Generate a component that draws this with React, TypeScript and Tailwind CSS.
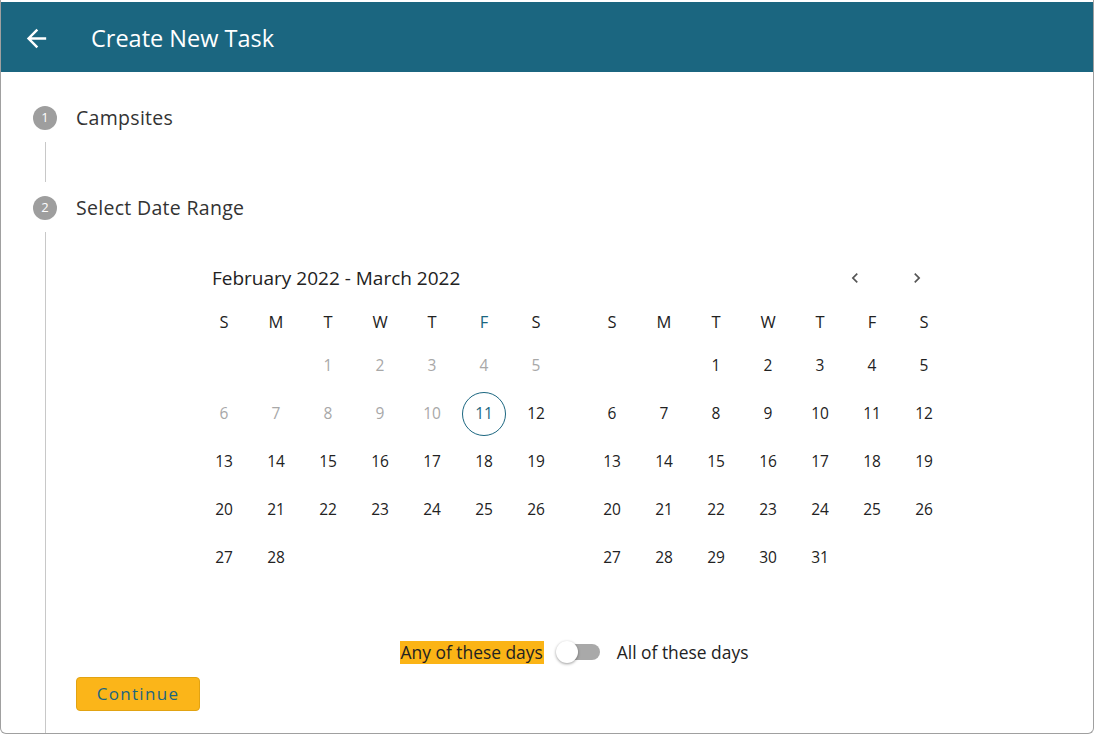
import React from "react";

const WEEK = ["S", "M", "T", "W", "T", "F", "S"];

type Day = { n: number; past?: boolean; selected?: boolean } | null;

const buildMonth = (offset: number, days: number, pastUntil: number, selected: number): Day[][] => {
  const cells: Day[] = [];
  for (let i = 0; i < offset; i++) cells.push(null);
  for (let d = 1; d <= days; d++) cells.push({ n: d, past: d < pastUntil, selected: d === selected });
  while (cells.length % 7 !== 0) cells.push(null);
  const rows: Day[][] = [];
  for (let i = 0; i < cells.length; i += 7) rows.push(cells.slice(i, i + 7));
  return rows;
};

const feb = buildMonth(2, 28, 11, 11);
const mar = buildMonth(2, 31, 0, 0);

const Month = ({ rows, todayCol }: { rows: Day[][]; todayCol?: number }) => (
  <div className="w-[364px]">
    <div className="grid grid-cols-7 h-[38px] items-center mt-[13px] mb-[1px]">
      {WEEK.map((w, i) => (
        <span
          key={i}
          className={`text-center text-[16.5px] ${i === todayCol ? "text-[#1b6680]" : "text-[#222]"}`}
        >
          {w}
        </span>
      ))}
    </div>
    {rows.map((row, r) => (
      <div key={r} className="grid grid-cols-7 h-[48px] items-center">
        {row.map((d, c) => (
          <div key={c} className="flex justify-center items-center">
            {d &&
              (d.selected ? (
                <span className="w-[44px] h-[44px] rounded-full border border-[#1b6680] text-[#1b6680] flex items-center justify-center text-[15.5px]">
                  {d.n}
                </span>
              ) : (
                <span className={`text-[15.5px] ${d.past ? "text-[#a8a8a8]" : "text-[#222]"}`}>{d.n}</span>
              ))}
          </div>
        ))}
      </div>
    ))}
  </div>
);

const Chevron = ({ dir }: { dir: "l" | "r" }) => (
  <svg width="20" height="20" viewBox="0 0 24 24" fill="#555">
    {dir === "l" ? (
      <path d="M15.41 7.41 14 6l-6 6 6 6 1.41-1.41L10.83 12z" />
    ) : (
      <path d="M10 6 8.59 7.41 13.17 12l-4.58 4.59L10 18l6-6z" />
    )}
  </svg>
);

const StepDot = ({ n }: { n: number }) => (
  <div className="w-[24px] h-[24px] rounded-full bg-[#9e9e9e] text-white text-[13px] flex items-center justify-center">
    {n}
  </div>
);

export default function App() {
  return (
    <div
      className="w-[1094px] h-[734px] bg-white border-x border-b border-[#a0a0a0] rounded-b-[6px] overflow-hidden pt-[2px]"
      style={{ fontFamily: '"Segoe UI", "Open Sans", sans-serif' }}
    >
      <header className="h-[70px] bg-[#1b6680] flex items-center text-white">
        <svg className="ml-[21px] mt-[2px]" width="29" height="29" viewBox="0 0 24 24" fill="white">
          <path d="M20 11H7.83l5.59-5.59L12 4l-8 8 8 8 1.41-1.41L7.83 13H20v-2z" />
        </svg>
        <h1 className="ml-[40px] mt-[3px] text-[23.5px]">Create New Task</h1>
      </header>

      <div className="pl-[32px] pt-[34px]">
        <div className="flex items-center gap-[19px] h-[24px]">
          <StepDot n={1} />
          <span className="text-[19.5px] text-[#333] tracking-[0.3px]">Campsites</span>
        </div>
        <div className="ml-[12px] w-px h-[40px] bg-[#c8c8c8] mt-[12px] mb-[14px]" />
        <div className="flex items-center gap-[19px] h-[24px]">
          <StepDot n={2} />
          <span className="text-[19.5px] text-[#333] tracking-[0.3px]">Select Date Range</span>
        </div>
        <div className="ml-[12px] mt-[12px] border-l border-[#c8c8c8] h-[520px] pl-[30px]">
          <div className="ml-[122px] w-[752px] pt-[34px]">
            <div className="flex items-center justify-between h-[24px]">
              <span className="ml-[14px] text-[19px] text-[#222]">February 2022 - March 2022</span>
              <div className="flex items-center gap-[22px] mr-[13px]">
                <button className="w-[40px] flex justify-center">
                  <Chevron dir="l" />
                </button>
                <button className="w-[40px] flex justify-center">
                  <Chevron dir="r" />
                </button>
              </div>
            </div>
            <div className="flex gap-[24px]">
              <Month rows={feb} todayCol={5} />
              <Month rows={mar} />
            </div>
            <div className="flex items-center justify-center mt-[57px] h-[26px] text-[17.4px] text-[#222]">
              <span className="bg-[#fbb416] h-[23px] px-[1px] flex items-center">Any of these days</span>
              <div className="relative ml-[12px] w-[45px] h-[24px] flex items-center">
                <div className="ml-[8px] w-[36px] h-[16px] rounded-full bg-[#a9a9a9]" />
                <div className="absolute left-0 top-[1px] w-[22px] h-[22px] rounded-full bg-white shadow-[0_1px_3px_rgba(0,0,0,0.4)]" />
              </div>
              <span className="ml-[16px]">All of these days</span>
            </div>
          </div>
          <button className="mt-[12px] w-[124px] h-[34px] bg-[#fbb519] border border-[#e2a312] rounded-[4px] text-[#1b6680] text-[17px] tracking-[1.3px]">
            Continue
          </button>
        </div>
      </div>
    </div>
  );
}
